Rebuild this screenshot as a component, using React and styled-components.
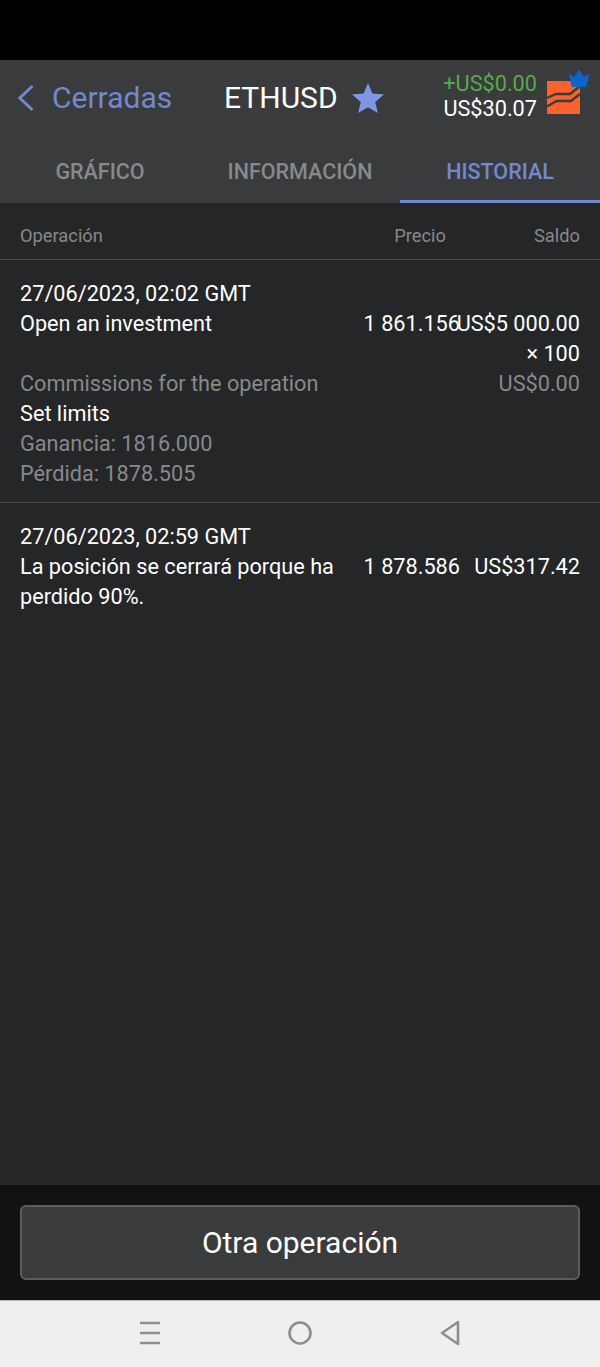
import React from "react";
import styled, { createGlobalStyle } from "styled-components";

const GlobalStyle = createGlobalStyle`
  html, body { margin: 0; padding: 0; background: #000; }
  * { box-sizing: border-box; }
  body { font-family: Roboto, "Liberation Sans", sans-serif; }
`;

const Screen = styled.div`
  width: 600px;
  height: 1367px;
  display: flex;
  flex-direction: column;
  overflow: hidden;
`;

const StatusBar = styled.div`
  height: 60px;
  background: #000;
`;

const Header = styled.header`
  height: 143px;
  background: #3a3b3d;
  display: flex;
  flex-direction: column;
`;

const TopBar = styled.div`
  height: 75px;
  display: flex;
  align-items: center;
  padding-left: 17px;
`;

const BackLink = styled.div`
  display: flex;
  align-items: center;
  gap: 17px;
  width: 207px;
  color: #7189d1;
  font-size: 30px;
`;

const Symbol = styled.div`
  display: flex;
  align-items: center;
  gap: 14px;
  color: #fff;
  font-size: 30px;
`;

const Account = styled.div`
  margin-left: auto;
  display: flex;
  align-items: center;
  padding-right: 20px;
  gap: 9px;
`;

const Amounts = styled.div`
  margin-top: -4px;
  text-align: right;
  font-size: 21.7px;
  line-height: 25px;
  color: #fff;
`;

const Profit = styled.div`
  color: #58a94b;
`;

const Logo = styled.div`
  position: relative;
  width: 34px;
  height: 34px;
  margin-top: -1px;
`;

const Crown = styled.svg`
  position: absolute;
  top: -11px;
  right: -10px;
`;

const Tabs = styled.nav`
  flex: 1;
  display: flex;
`;

const Tab = styled.div`
  flex: 1;
  display: flex;
  align-items: center;
  justify-content: center;
  padding-top: 7px;
  font-size: 21.5px;
  font-weight: 500;
  color: ${(p) => (p.$active ? "#7189d1" : "#88898b")};
  border-bottom: 3px solid ${(p) => (p.$active ? "#7189d1" : "transparent")};
`;

const Content = styled.main`
  flex: 1;
  background: #252628;
`;

const TableHead = styled.div`
  height: 57px;
  display: grid;
  grid-template-columns: 1fr 120px 134px;
  align-items: center;
  padding: 8px 20px 0;
  color: #88898b;
  font-size: 18.3px;
  border-bottom: 1px solid #47484b;
`;

const HeadCell = styled.div`
  text-align: ${(p) => (p.$left ? "left" : "right")};
`;

const Entry = styled.section`
  padding: 19px 20px 13px;
  font-size: 21.7px;
  line-height: 30px;
  color: #fff;
  border-bottom: ${(p) => (p.$last ? "none" : "1px solid #47484b")};
`;

const Line = styled.div`
  display: grid;
  grid-template-columns: 1fr 120px 120px;
`;

const Label = styled.div`
  color: ${(p) => (p.$muted ? "#88898b" : "#fff")};
`;

const Value = styled.div`
  display: flex;
  flex-direction: column;
  align-items: flex-end;
  white-space: nowrap;
  color: ${(p) => (p.$muted ? "#88898b" : "#fff")};
`;

const Footer = styled.div`
  height: 115px;
  background: #111213;
  padding: 20px;
`;

const ActionButton = styled.button`
  width: 100%;
  height: 75px;
  background: #3a3b3d;
  border: 2px solid #5c5d60;
  border-radius: 6px;
  color: #fff;
  font-family: inherit;
  font-size: 30px;
`;

const NavBar = styled.div`
  height: 67px;
  background: #efefef;
  border-top: 1px solid #bdbdbd;
  display: flex;
  align-items: center;
  justify-content: center;
  gap: 127px;
  padding-bottom: 2px;
`;

const Chevron = () => (
  <svg width="18" height="28" viewBox="0 0 18 28" fill="none">
    <path d="M15.5 2 L2.8 14 L15.5 26" stroke="#7189d1" strokeWidth="3" />
  </svg>
);

const Star = () => (
  <svg width="32" height="30" viewBox="0 0 32 30">
    <path d="M16 0 L20.4 10.4 L32 11.4 L23.2 19 L25.9 30 L16 24.2 L6.1 30 L8.8 19 L0 11.4 L11.6 10.4 Z" fill="#7d96e6" />
  </svg>
);

const Brand = () => (
  <Logo>
    <svg width="34" height="34" viewBox="0 0 34 34">
      <path d="M1 1 H34 V34 H1 Z" fill="#f9622d" />
      <path
        d="M1 18 L10 14 H24 L33 7 M1 26.5 L10.5 21 H25 L34 14"
        fill="none"
        stroke="#3a3b3d"
        strokeWidth="2.4"
      />
    </svg>
    <Crown width="22" height="19" viewBox="0 0 22 19">
      <path
        d="M1 5 L6 8.3 L11 1 L16 8.3 L21 5 L18 17.7 H4 Z"
        fill="#0a66c8"
        stroke="#0a66c8"
        strokeWidth="0.6"
        strokeLinejoin="round"
      />
    </Crown>
  </Logo>
);

const MenuIcon = () => (
  <svg width="22" height="24" viewBox="0 0 22 24" fill="none" stroke="#8e8e8e" strokeWidth="2.6">
    <path d="M1 2 H21 M1 12 H21 M1 22 H21" />
  </svg>
);

const HomeIcon = () => (
  <svg width="24" height="24" viewBox="0 0 24 24" fill="none" stroke="#8e8e8e" strokeWidth="2.6">
    <circle cx="12" cy="12" r="10.5" />
  </svg>
);

const BackIcon = () => (
  <svg width="22" height="26" viewBox="0 0 22 26" fill="none" stroke="#8e8e8e" strokeWidth="2.6" strokeLinejoin="round">
    <path d="M19 2 L3 13 L19 24 Z" />
  </svg>
);

export default function App() {
  return (
    <>
      <GlobalStyle />
      <Screen>
        <StatusBar />
        <Header>
          <TopBar>
            <BackLink>
              <Chevron />
              Cerradas
            </BackLink>
            <Symbol>
              ETHUSD
              <Star />
            </Symbol>
            <Account>
              <Amounts>
                <Profit>+US$0.00</Profit>
                <div>US$30.07</div>
              </Amounts>
              <Brand />
            </Account>
          </TopBar>
          <Tabs>
            <Tab>GRÁFICO</Tab>
            <Tab>INFORMACIÓN</Tab>
            <Tab $active>HISTORIAL</Tab>
          </Tabs>
        </Header>
        <Content>
          <TableHead>
            <HeadCell $left>Operación</HeadCell>
            <HeadCell>Precio</HeadCell>
            <HeadCell>Saldo</HeadCell>
          </TableHead>
          <Entry>
            <Label>27/06/2023, 02:02 GMT</Label>
            <Line>
              <Label>Open an investment</Label>
              <Value>1 861.156</Value>
              <Value>
                <span>US$5 000.00</span>
                <span>× 100</span>
              </Value>
            </Line>
            <Line>
              <Label $muted>Commissions for the operation</Label>
              <span />
              <Value $muted>US$0.00</Value>
            </Line>
            <Label>Set limits</Label>
            <Label $muted>Ganancia: 1816.000</Label>
            <Label $muted>Pérdida: 1878.505</Label>
          </Entry>
          <Entry $last>
            <Label>27/06/2023, 02:59 GMT</Label>
            <Line>
              <Label>La posición se cerrará porque ha perdido 90%.</Label>
              <Value>1 878.586</Value>
              <Value>US$317.42</Value>
            </Line>
          </Entry>
        </Content>
        <Footer>
          <ActionButton>Otra operación</ActionButton>
        </Footer>
        <NavBar>
          <MenuIcon />
          <HomeIcon />
          <BackIcon />
        </NavBar>
      </Screen>
    </>
  );
}
